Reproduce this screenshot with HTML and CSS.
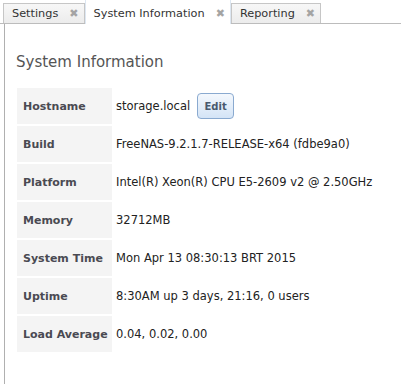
FILE: index.html
```html
<!DOCTYPE html>
<html>
<head>
<meta charset="utf-8">
<link rel="stylesheet" href="styles.css">
</head>
<body>
<div class="tabs">
  <div class="tab"><span class="tab-label">Settings</span><span class="tab-close">&#x2716;</span></div>
  <div class="tab active"><span class="tab-label">System Information</span><span class="tab-close">&#x2716;</span></div>
  <div class="tab"><span class="tab-label">Reporting</span><span class="tab-close">&#x2716;</span></div>
</div>
<div class="panel">
  <h1 class="title">System Information</h1>
  <table class="info">
    <tr><th>Hostname</th><td><span class="host">storage.local</span><button class="edit">Edit</button></td></tr>
    <tr><th>Build</th><td>FreeNAS-9.2.1.7-RELEASE-x64 (fdbe9a0)</td></tr>
    <tr><th>Platform</th><td>Intel(R) Xeon(R) CPU E5-2609 v2 @ 2.50GHz</td></tr>
    <tr><th>Memory</th><td>32712MB</td></tr>
    <tr><th>System Time</th><td>Mon Apr 13 08:30:13 BRT 2015</td></tr>
    <tr><th>Uptime</th><td>8:30AM up 3 days, 21:16, 0 users</td></tr>
    <tr><th>Load Average</th><td>0.04, 0.02, 0.00</td></tr>
  </table>
</div>
</body>
</html>
```
FILE: styles.css
```css
html, body {
  margin: 0;
  padding: 0;
  background: #fff;
  font-family: "DejaVu Sans", Verdana, sans-serif;
  font-size: 11px;
  color: #222;
}
.tabs {
  display: flex;
  align-items: flex-end;
  height: 24px;
  padding-left: 3px;
  border-bottom: 1px solid #bcbcbc;
  box-sizing: border-box;
}
.tab {
  display: flex;
  align-items: center;
  height: 20px;
  box-sizing: border-box;
  padding: 0 5px 0 8px;
  border: 1px solid #c6c6c6;
  border-bottom: none;
  background: linear-gradient(#f7f7f7, #ececec);
  color: #333;
  font-size: 11.3px;
  margin-bottom: 0;
}
.tab.active {
  height: 25px;
  margin-bottom: -1px;
  padding-top: 2px;
  background: #fff;
  border-color: #dde7f2;
  border-bottom: none;
}
.tab-label {
  margin-right: 11px;
}
.tab-close {
  font-size: 11px;
  color: #a4a4a4;
  font-weight: bold;
}
.panel {
  margin-left: 4px;
  border-left: 1px solid #b0b0b0;
  height: 360px;
  padding-left: 12px;
}
.title {
  margin: 0;
  padding-top: 28px;
  padding-bottom: 14px;
  font-size: 15px;
  font-weight: normal;
  color: #555;
  line-height: 20px;
  margin-left: -1px;
}
.info {
  border-collapse: separate;
  border-spacing: 0 2px;
}
.info th {
  width: 89px;
  height: 36px;
  padding: 0 0 0 6px;
  background: #f4f4f4;
  text-align: left;
  color: #4a4a52;
  font-weight: bold;
  white-space: nowrap;
}
.info td {
  padding: 0 0 0 4px;
  white-space: nowrap;
  color: #222;
  font-size: 11.5px;
}
.edit {
  margin-left: 7px;
  width: 37px;
  height: 26px;
  border: 1px solid #8aaad0;
  border-radius: 4px;
  background: linear-gradient(#f4f8fd, #d4e4f6);
  font-family: "DejaVu Sans", Verdana, sans-serif;
  font-size: 10px;
  font-weight: bold;
  color: #4a5a6e;
  padding: 0;
  vertical-align: middle;
}
```
